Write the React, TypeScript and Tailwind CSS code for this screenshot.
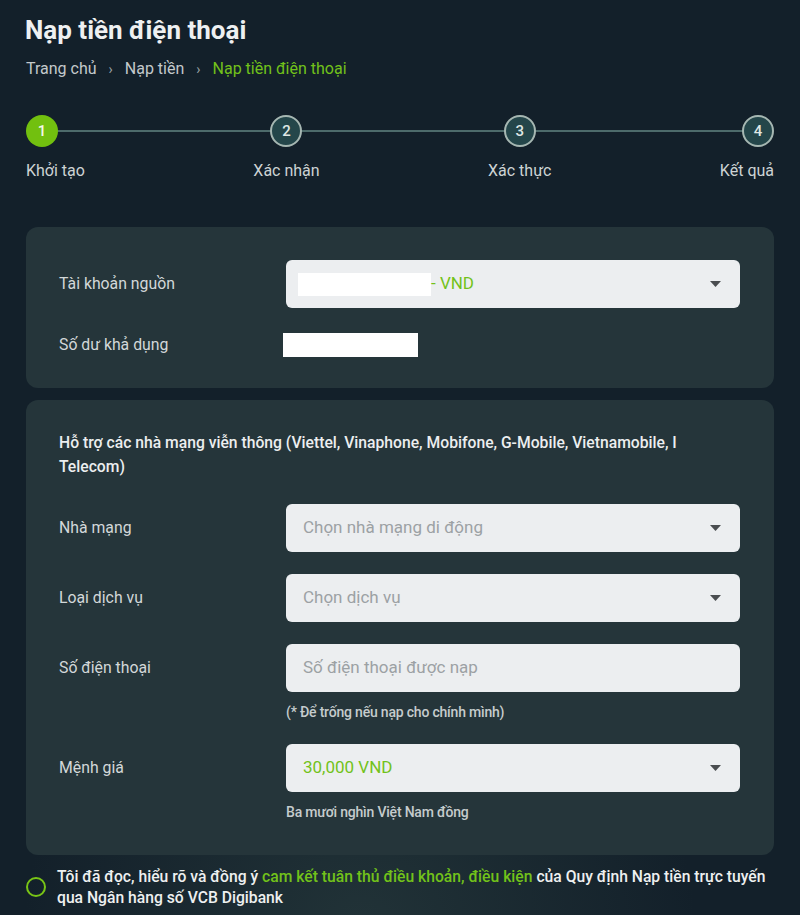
import type { ReactNode } from "react";

const steps = ["Khởi tạo", "Xác nhận", "Xác thực", "Kết quả"];

function Caret() {
  return (
    <svg width="11" height="6" viewBox="0 0 11 6" className="shrink-0">
      <path d="M0 0h11L5.5 6z" fill="#4a4d50" />
    </svg>
  );
}

function SelectBox({ children, pl = "pl-[17px]" }: { children: ReactNode; pl?: string }) {
  return (
    <div className={`flex h-12 w-full items-center justify-between rounded-md bg-[#eceef0] pr-[19px] ${pl}`}>
      <div className="flex min-w-0 items-center text-[17px]">{children}</div>
      <Caret />
    </div>
  );
}

function Row({ label, children, hint }: { label: string; children: ReactNode; hint?: string }) {
  return (
    <div className="flex items-start">
      <div className="flex h-12 w-[227px] shrink-0 items-center text-[15.8px] text-[#d3d8d9]">{label}</div>
      <div className="min-w-0 flex-1">
        {children}
        {hint ? (
          <p className="mt-[10px] text-[14px] font-medium leading-5 tracking-[-0.2px] text-[#c5cccd]">{hint}</p>
        ) : null}
      </div>
    </div>
  );
}

export default function App() {
  return (
    <div
      className="min-h-[915px] w-full bg-[#13202a] px-[26px] pt-[14px] pb-4 text-white"
      style={{
        fontFamily: "Roboto, 'Noto Sans', sans-serif",
        backgroundImage:
          "radial-gradient(ellipse 60% 45% at 45% 100%, rgba(60,85,80,0.35), rgba(19,32,42,0) 70%)",
      }}
    >
      <h1 className="-ml-px text-[26px] font-bold leading-8 text-[#eef0f1]">Nạp tiền điện thoại</h1>

      <nav className="mt-3 flex items-center gap-[12px] text-[16px] leading-[22px] text-[#c3c9cb]">
        <span>Trang chủ</span>
        <span className="text-[14px] text-[#9aa3a6]">›</span>
        <span>Nạp tiền</span>
        <span className="text-[14px] text-[#9aa3a6]">›</span>
        <span className="text-[#72c21a]">Nạp tiền điện thoại</span>
      </nav>

      <div className="relative mt-[35px] flex justify-between">
        <div className="absolute top-[15px] right-[17px] left-4 h-[2px] bg-[#4d6b6b]" />
        {steps.map((step, i) => {
          const align = i === 0 ? "items-start" : i === steps.length - 1 ? "items-end" : "items-center";
          const active = i === 0;
          return (
            <div key={step} className={`relative flex flex-col ${align}`}>
              <div
                className={`flex h-8 w-8 items-center justify-center rounded-full text-[15px] font-medium ${
                  active
                    ? "bg-[#72c00f] text-[#f4f8ea]"
                    : "border-2 border-[#a6b7b2] bg-[#24464a] text-[#dfe7e4]"
                }`}
              >
                {i + 1}
              </div>
              <span className="mt-[14px] text-[16px] leading-5 text-[#cdd3d4]">{step}</span>
            </div>
          );
        })}
      </div>

      <section className="mt-[46px] rounded-xl bg-[#25353a] pt-[33px] pr-[34px] pb-[31px] pl-[33px]">
        <Row label="Tài khoản nguồn">
          <SelectBox pl="pl-3">
            <span className="h-[23px] w-[133px] bg-white" />
            <span className="text-[#72c21a]">- VND</span>
          </SelectBox>
        </Row>
        <div className="mt-[25px] flex items-center">
          <div className="w-[227px] shrink-0 text-[15.8px] leading-6 text-[#d3d8d9]">Số dư khả dụng</div>
          <span className="-ml-[3px] h-6 w-[135px] bg-white" />
        </div>
      </section>

      <section className="mt-3 rounded-xl bg-[#25353a] pt-[31px] pr-[34px] pb-[33px] pl-[33px]">
        <p className="text-[15.7px] font-medium leading-6 text-[#eceeef]">
          Hỗ trợ các nhà mạng viễn thông (Viettel, Vinaphone, Mobifone, G-Mobile, Vietnamobile, I
          <br />
          Telecom)
        </p>
        <div className="mt-[25px] flex flex-col gap-[22px]">
          <Row label="Nhà mạng">
            <SelectBox>
              <span className="text-[#9ca1a4]">Chọn nhà mạng di động</span>
            </SelectBox>
          </Row>
          <Row label="Loại dịch vụ">
            <SelectBox>
              <span className="text-[#9ca1a4]">Chọn dịch vụ</span>
            </SelectBox>
          </Row>
          <Row label="Số điện thoại" hint="(* Để trống nếu nạp cho chính mình)">
            <div className="flex h-12 w-full items-center rounded-md bg-[#eceef0] pl-[17px] text-[17px] text-[#9ca1a4]">
              Số điện thoại được nạp
            </div>
          </Row>
          <Row label="Mệnh giá" hint="Ba mươi nghìn Việt Nam đồng">
            <SelectBox>
              <span className="text-[#72c21a]">30,000 VND</span>
            </SelectBox>
          </Row>
        </div>
      </section>

      <label className="mt-[11px] flex items-center gap-[11px]">
        <span className="h-5 w-5 shrink-0 rounded-full border-2 border-[#79c416]" />
        <span className="text-[15.7px] font-medium leading-[21px] text-[#eef0f0]">
          Tôi đã đọc, hiểu rõ và đồng ý <span className="text-[#72c21a]">cam kết tuân thủ điều khoản, điều kiện</span>{" "}
          của Quy định Nạp tiền trực tuyến
          <br />
          qua Ngân hàng số VCB Digibank
        </span>
      </label>
    </div>
  );
}
